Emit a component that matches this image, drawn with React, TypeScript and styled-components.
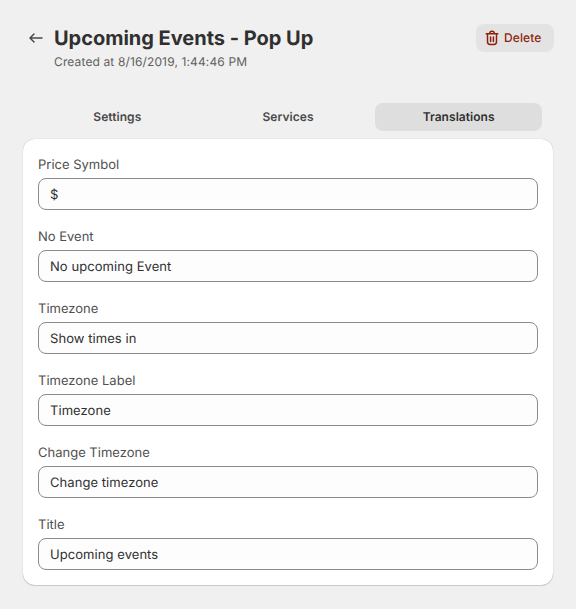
import React, { useState } from "react";
import styled, { createGlobalStyle } from "styled-components";

const GlobalStyle = createGlobalStyle`
  *, *::before, *::after { box-sizing: border-box; }
  body {
    margin: 0;
    background: #f0f0f0;
    color: #303030;
    font-family: Inter, "Liberation Sans", sans-serif;
    font-size: 13px;
    line-height: 20px;
    text-rendering: geometricPrecision;
  }
  button, input { font: inherit; color: inherit; text-rendering: inherit; letter-spacing: inherit; }
`;

const Page = styled.main`
  width: 576px;
  min-height: 609px;
  padding: 24px 22px 0 23px;
`;

const Header = styled.header`
  display: flex;
  align-items: flex-start;
  height: 79px;
`;

const BackButton = styled.button`
  display: flex;
  align-items: center;
  justify-content: center;
  width: 26px;
  height: 28px;
  margin-right: 5px;
  padding: 0;
  border: 0;
  background: none;
  color: #4a4a4a;
`;

const Heading = styled.div`
  flex: 1;
`;

const Title = styled.h1`
  margin: 0;
  font-size: 20px;
  font-weight: 650;
  line-height: 28px;
  letter-spacing: -0.02px;
`;

const Subtitle = styled.p`
  margin: 0;
  font-size: 12px;
  letter-spacing: 0.13px;
  color: #616161;
`;

const DeleteButton = styled.button`
  display: flex;
  align-items: center;
  gap: 4px;
  width: 78px;
  height: 28px;
  padding: 0 0 0 8px;
  border: 0;
  border-radius: 8px;
  background: #e3e3e3;
  color: #8e1f0b;
  font-size: 12px;
  font-weight: 550;
  letter-spacing: 0.1px;
`;

const TabList = styled.div`
  display: grid;
  grid-template-columns: repeat(3, 1fr);
  gap: 4px;
  margin: 0 12px 8px 11px;
`;

const Tab = styled.button<{ $selected: boolean }>`
  height: 28px;
  padding: 0;
  border: 0;
  border-radius: 8px;
  background: ${(p) => (p.$selected ? "#dedede" : "transparent")};
  color: ${(p) => (p.$selected ? "#303030" : "#4a4a4a")};
  font-size: 12px;
  font-weight: 600;
  letter-spacing: 0.05px;
`;

const Card = styled.section`
  display: grid;
  gap: 16px;
  width: 530px;
  height: 446px;
  padding: 15px 15px 0;
  align-content: start;
  border-radius: 12px;
  background: #fff;
  box-shadow: 0 1px 1px rgba(0, 0, 0, 0.15), 0 0 1px rgba(0, 0, 0, 0.3);
`;

const Field = styled.label`
  display: grid;
  gap: 2px;
  line-height: 22px;
  color: #505050;
`;

const TextInput = styled.input`
  width: 100%;
  height: 32px;
  padding: 2px 11px 0;
  border: 1px solid #8a8a8a;
  border-radius: 8px;
  outline: none;
  background: #fdfdfd;
  color: #303030;
  letter-spacing: 0.06px;
`;

const ArrowIcon = () => (
  <svg width="20" height="20" viewBox="0 0 20 20" fill="none" stroke="currentColor" strokeWidth="1.5" strokeLinecap="round" strokeLinejoin="round">
    <path d="M16 10H4.2M8 6l-4 4 4 4" />
  </svg>
);

const TrashIcon = () => (
  <svg width="16" height="20" viewBox="2 0 16 20" fill="none" stroke="currentColor" strokeWidth="1.5" strokeLinecap="round" strokeLinejoin="round">
    <path d="M4.25 5.75h11.5M7.75 5.5a2.25 2.2 0 0 1 4.5 0M5.5 6v7.8c0 1.6.8 2.7 2.7 2.7h3.6c1.9 0 2.7-1.1 2.7-2.7V6M8.6 9v4.4M11.4 9v4.4" />
  </svg>
);

const tabs = ["Settings", "Services", "Translations"];

const fields = [
  { label: "Price Symbol", value: "$" },
  { label: "No Event", value: "No upcoming Event" },
  { label: "Timezone", value: "Show times in" },
  { label: "Timezone Label", value: "Timezone" },
  { label: "Change Timezone", value: "Change timezone" },
  { label: "Title", value: "Upcoming events" },
];

export default function App() {
  const [active, setActive] = useState("Translations");
  return (
    <>
      <GlobalStyle />
      <Page>
        <Header>
          <BackButton aria-label="Back"><ArrowIcon /></BackButton>
          <Heading>
            <Title>Upcoming Events - Pop Up</Title>
            <Subtitle>Created at 8/16/2019, 1:44:46 PM</Subtitle>
          </Heading>
          <DeleteButton><TrashIcon />Delete</DeleteButton>
        </Header>
        <TabList role="tablist">
          {tabs.map((tab) => (
            <Tab key={tab} role="tab" aria-selected={tab === active} $selected={tab === active} onClick={() => setActive(tab)}>
              {tab}
            </Tab>
          ))}
        </TabList>
        <Card>
          {fields.map((field) => (
            <Field key={field.label}>
              {field.label}
              <TextInput defaultValue={field.value} />
            </Field>
          ))}
        </Card>
      </Page>
    </>
  );
}
